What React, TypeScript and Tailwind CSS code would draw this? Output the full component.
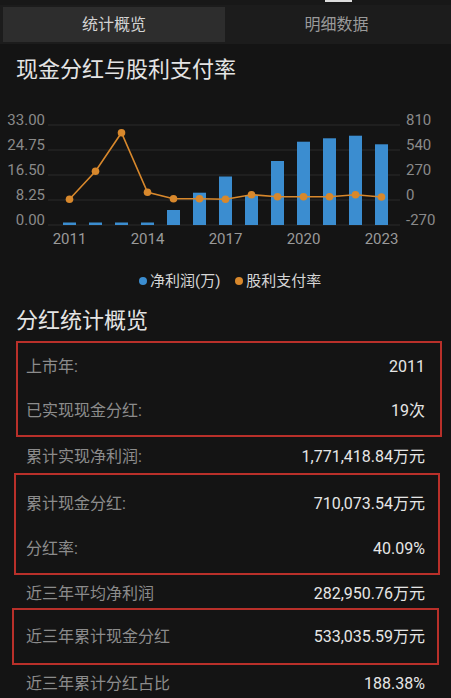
import React from "react";

const FONT = { fontFamily: 'Roboto, "Noto Sans CJK SC", sans-serif' };

const years = [2011, 2012, 2013, 2014, 2015, 2016, 2017, 2018, 2019, 2020, 2021, 2022, 2023];
// bar tops / line points, page y minus chart top (85)
const barTops = [222.5, 222.5, 222.5, 222.5, 210, 192.7, 176.5, 195, 161, 141.7, 138.3, 135.7, 144.3];
const linePts = [199.3, 171.3, 132.7, 192.3, 198.7, 198.7, 199.3, 194.7, 196.7, 196.7, 196.7, 194.7, 197];

const BLUE = "#3b8dd0";
const ORANGE = "#d8882c";

function Chart() {
  const top = 85;
  const cx = (i: number) => 69.5 + i * 26;
  const grid = [40, 65, 90, 115, 140];
  const leftLabels = ["33.00", "24.75", "16.50", "8.25", "0.00"];
  const rightLabels = ["810", "540", "270", "0", "-270"];
  const points = linePts.map((y, i) => `${cx(i)},${y - top}`).join(" ");

  return (
    <svg width="451" height="186" viewBox="0 0 451 186" className="block" style={FONT}>
      {grid.map((g) => (
        <line key={g} x1="48" x2="400" y1={g} y2={g} stroke="#2b2b2b" strokeWidth="1" />
      ))}
      {leftLabels.map((t, i) => (
        <text key={t} x="45" y={grid[i] - 4} textAnchor="end" dominantBaseline="middle" fontSize="15" fill="#8a8a8a">
          {t}
        </text>
      ))}
      {rightLabels.map((t, i) => (
        <text key={t} x="406" y={grid[i] - 4} dominantBaseline="middle" fontSize="15" fill="#8a8a8a">
          {t}
        </text>
      ))}
      {barTops.map((y, i) => (
        <rect key={i} x={cx(i) - 6.5} y={y - top} width="13" height={140 - (y - top)} fill={BLUE} />
      ))}
      <polyline points={points} fill="none" stroke={ORANGE} strokeWidth="1.6" />
      {linePts.map((y, i) => (
        <circle key={i} cx={cx(i)} cy={y - top} r="3.8" fill={ORANGE} />
      ))}
      {[0, 3, 6, 9, 12].map((i) => (
        <text key={i} x={cx(i)} y="155" textAnchor="middle" dominantBaseline="middle" fontSize="15" fill="#9a9a9a">
          {years[i]}
        </text>
      ))}
    </svg>
  );
}

function Row({ label, value, className = "" }: { label: string; value: string; className?: string }) {
  return (
    <div className={`flex items-center justify-between ${className}`}>
      <span className="text-[16px] text-[#8c8c8c]">{label}</span>
      <span className="text-[16px] text-[#e6e6e6]">{value}</span>
    </div>
  );
}

export default function App() {
  return (
    <div className="w-[451px] min-h-[698px] bg-[#141414] overflow-hidden" style={FONT}>
      {/* top strip */}
      <div className="h-[5px] bg-[#181818] flex">
        <div className="ml-[325px] w-[27px] h-[2px] bg-[#dcdcdc]" />
      </div>

      {/* tabs */}
      <div className="h-[39px] bg-[#1c1c1c] px-[3px] pt-[2px] pb-[2px] flex">
        <div className="w-[222px] h-[35px] bg-[#2d2d2d] flex items-center justify-center text-[16px] text-[#d4d4d4]">
          统计概览
        </div>
        <div className="flex-1 flex items-center justify-center text-[16px] text-[#9a9a9a]">明细数据</div>
      </div>

      <h1 className="pl-[16px] pt-[11px] h-[41px] leading-[30px] text-[22px] text-[#e4e4e4]">现金分红与股利支付率</h1>

      <Chart />

      <div className="h-[20px] flex items-center text-[15px] text-[#d6d6d6] leading-[20px]">
        <span className="ml-[139px] w-[8px] h-[8px] rounded-full bg-[#3b8dd0]" />
        <span className="ml-[3px]">净利润(万)</span>
        <span className="ml-[15px] w-[8px] h-[8px] rounded-full bg-[#d8882c]" />
        <span className="ml-[3px]">股利支付率</span>
      </div>

      <h2 className="pl-[16px] mt-[15px] h-[30px] leading-[30px] text-[22px] text-[#e4e4e4]">分红统计概览</h2>

      <div className="mt-[5px] ml-[16px] w-[426px] border-2 border-[#b9302a] py-[2px] pl-[8px] pr-[15px]">
        <Row label="上市年:" value="2011" className="h-[44px]" />
        <Row label="已实现现金分红:" value="19次" className="h-[44px]" />
      </div>

      <Row label="累计实现净利润:" value="1,771,418.84万元" className="h-[36px] pt-[4px] px-[26px]" />

      <div className="ml-[14px] w-[426px] border-2 border-[#b9302a] pt-[6px] pb-[2px] pl-[10px] pr-[13px]">
        <Row label="累计现金分红:" value="710,073.54万元" className="h-[45px]" />
        <Row label="分红率:" value="40.09%" className="h-[45px]" />
      </div>

      <Row label="近三年平均净利润" value="282,950.76万元" className="h-[33px] pt-[5px] px-[26px]" />

      <div className="ml-[12px] w-[427px] border-2 border-[#b9302a] pl-[12px] pr-[12px]">
        <Row label="近三年累计现金分红" value="533,035.59万元" className="h-[53px]" />
      </div>

      <Row label="近三年累计分红占比" value="188.38%" className="h-[38px] px-[26px]" />
    </div>
  );
}
